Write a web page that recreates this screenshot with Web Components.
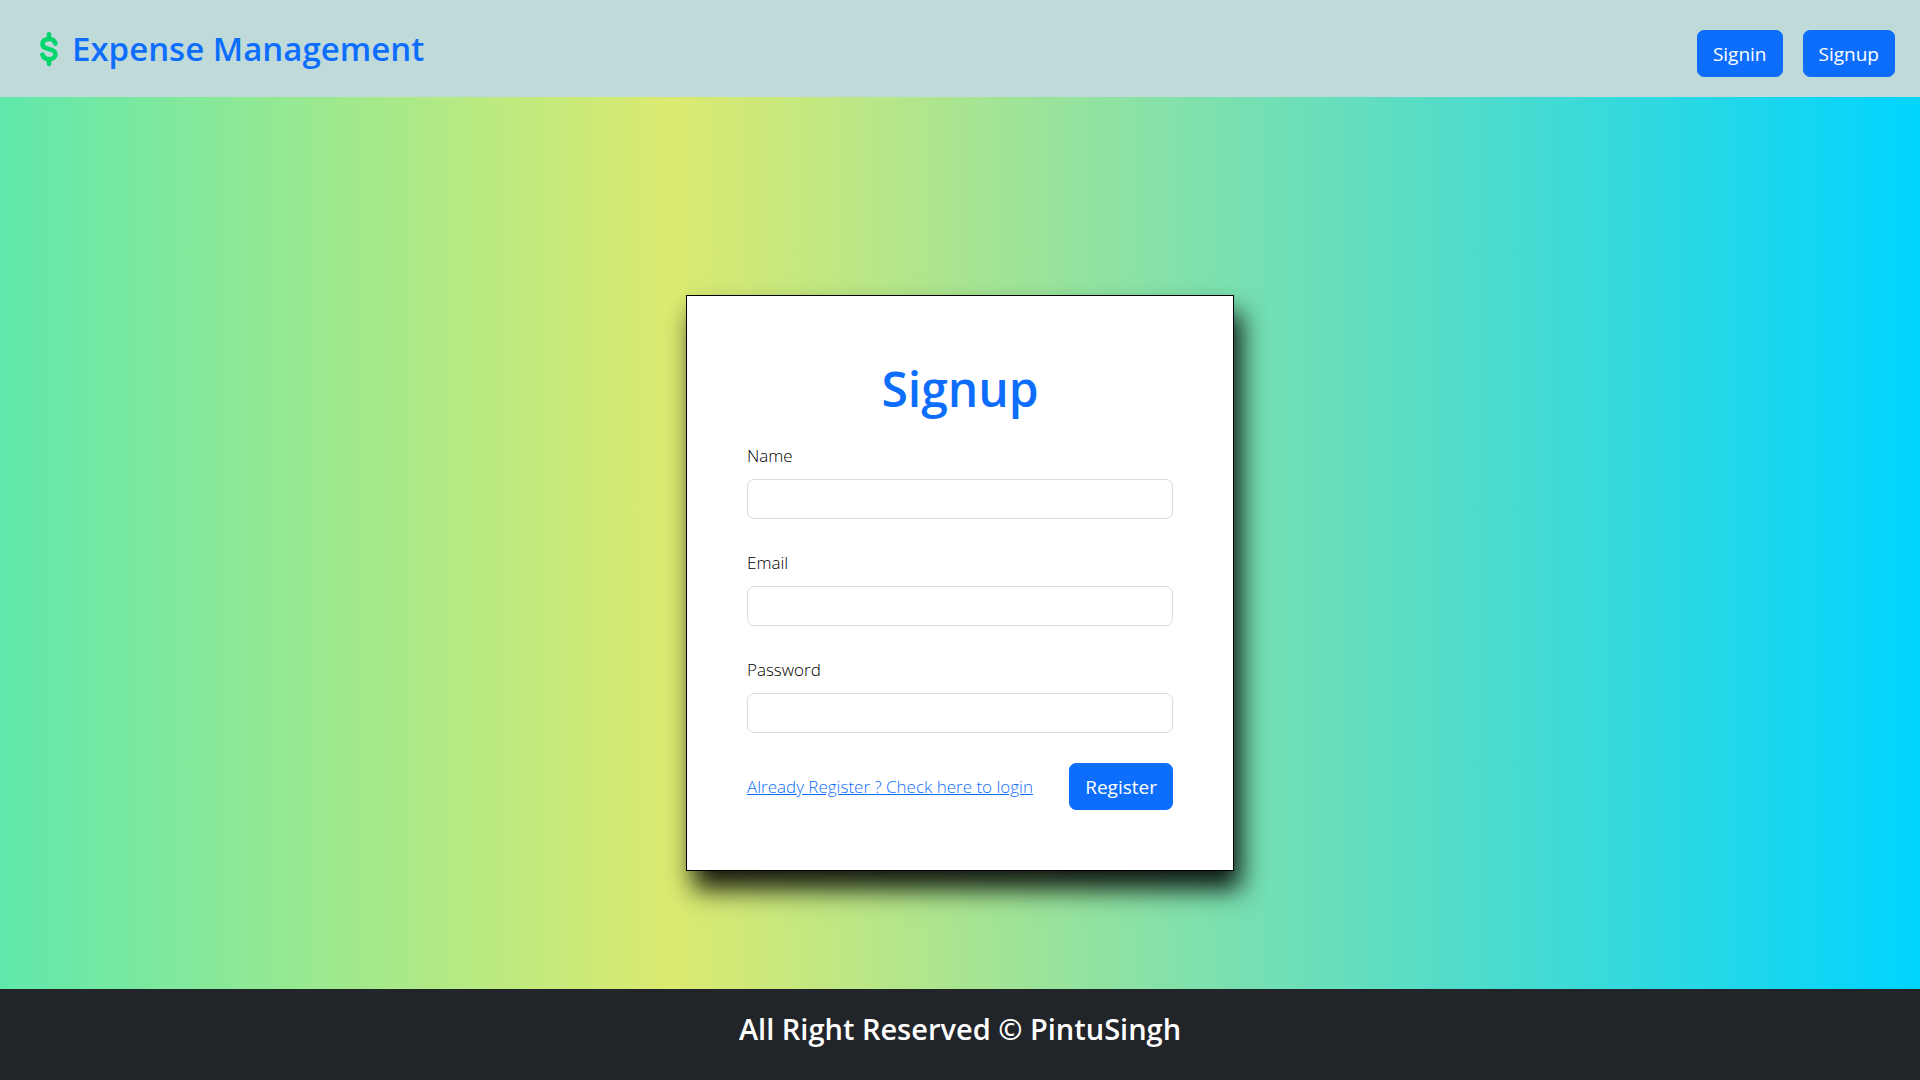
<!DOCTYPE html>
<html lang="en">
<head>
<meta charset="utf-8">
<title>Expense Management</title>
<style>
  body {
    margin: 0;
    font: 300 17px/27px "Open Sans", "Noto Sans", sans-serif;
    color: #000;
    --primary: #0d6efd;
  }
</style>
</head>
<body>
<signup-page></signup-page>
<script>
const define = (name, html, setup) => customElements.define(name, class extends HTMLElement {
  constructor() {
    super();
    const template = document.createElement('template');
    template.innerHTML = html;
    this.attachShadow({ mode: 'open' }).append(template.content.cloneNode(true));
  }
  connectedCallback() { if (setup) setup(this, this.shadowRoot); }
});

define('app-button', `
  <style>
    :host { display: block; }
    button {
      display: block; padding: 10px 15px 8px; border: 1px solid var(--primary); border-radius: 7px;
      background: var(--primary); color: #fff; cursor: pointer;
      font: 400 19px/27px "Open Sans", "Noto Sans", sans-serif; white-space: nowrap;
    }
  </style>
  <button type="button"><slot></slot></button>`,
  (host, root) => { root.querySelector('button').type = host.getAttribute('type') || 'button'; });

define('app-brand', `
  <style>
    :host { display: flex; align-items: center; gap: 14px; color: var(--primary); font-size: 33px; line-height: 48px; font-weight: 600; }
    svg { display: block; width: 18px; height: 36px; }
    span { white-space: nowrap; }
  </style>
  <svg viewBox="0 0 18 36" fill="none" stroke="#00d66b" stroke-width="4.600" stroke-linecap="round" aria-hidden="true">
    <path d="M9 3.200v4M9 29v4"/>
    <path d="M15.400 12.600C14.600 9.800 12.300 8 9 8c-3.900 0-6.500 2.100-6.500 5 0 3.300 2.800 4.100 6.500 5.100s6.500 1.900 6.500 5.100c0 2.900-2.600 5-6.500 5-3.300 0-5.700-1.700-6.500-4.500"/>
  </svg>
  <span><slot></slot></span>`);

define('app-header', `
  <style>
    :host { display: block; }
    header { display: flex; justify-content: space-between; align-items: flex-start; padding: 25px 25px 20px 40px; background: #c0dada; }
    nav { display: flex; gap: 20px; padding: 5px 0 0; }
  </style>
  <header>
    <app-brand>Expense Management</app-brand>
    <nav><app-button>Signin</app-button><app-button>Signup</app-button></nav>
  </header>`);

define('text-field', `
  <style>
    :host { display: block; }
    label { display: block; margin-bottom: 10px; }
    input {
      display: block; box-sizing: border-box; width: 100%; height: 40px; padding: 6px 12px;
      border: 1px solid #d8dadc; border-radius: 7px; background: #fff; color: inherit; font: inherit;
    }
  </style>
  <label for="field"></label>
  <input id="field">`,
  (host, root) => {
    root.querySelector('label').textContent = host.getAttribute('label');
    root.querySelector('input').type = host.getAttribute('type') || 'text';
  });

define('signup-card', `
  <style>
    :host { display: block; width: 548px; max-width: 100%; }
    form {
      padding: 60px; border: 1px solid #000;
      background: #fff; box-shadow: 7px 18px 24px rgba(0, 0, 0, .9);
    }
    h1 { margin: 0 0 20px; color: var(--primary); font-size: 48px; line-height: 66px; font-weight: 600; text-align: center; }
    .fields { display: flex; flex-direction: column; gap: 30px; }
    .actions { display: flex; align-items: center; justify-content: space-between; }
    a { color: var(--primary); text-decoration: underline; white-space: nowrap; }
  </style>
  <form>
    <h1>Signup</h1>
    <div class="fields">
      <text-field label="Name"></text-field>
      <text-field label="Email" type="email"></text-field>
      <text-field label="Password" type="password"></text-field>
      <div class="actions"><a href="#login">Already Register ? Check here to login</a><app-button type="submit">Register</app-button></div>
    </div>
  </form>`);

define('app-footer', `
  <style>
    :host { display: block; }
    footer { padding: 20px 20px 31px; background: #212529; color: #fff; font-size: 29px; line-height: 40px; font-weight: 600; text-align: center; }
  </style>
  <footer><slot></slot></footer>`);

define('signup-page', `
  <style>
    :host { display: flex; flex-direction: column; min-height: 100vh; }
    main {
      flex: 1; display: flex; align-items: center; justify-content: center; padding: 100px 20px 20px; box-sizing: border-box;
      background: linear-gradient(90deg, #60e8ac 0%, #dcea70 35%, #00d4ff 100%);
    }
  </style>
  <app-header></app-header>
  <main><signup-card></signup-card></main>
  <app-footer>All Right Reserved © PintuSingh</app-footer>`);
</script>
</body>
</html>
